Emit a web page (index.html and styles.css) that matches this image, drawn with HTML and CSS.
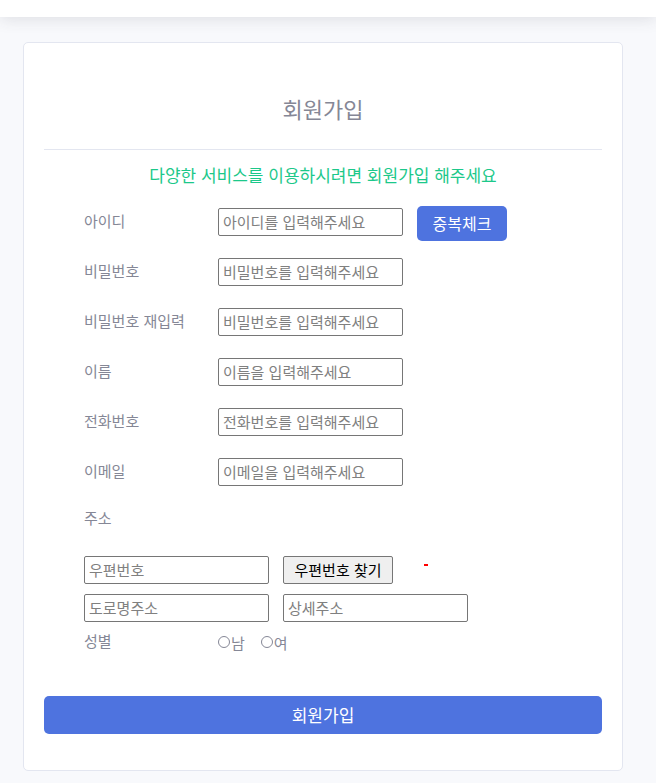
FILE: index.html
```html
<!DOCTYPE html>
<html lang="ko">
<head>
<meta charset="utf-8">
<title>회원가입</title>
<link rel="stylesheet" href="styles.css">
</head>
<body>
<header class="topbar"></header>
<main class="page">
  <section class="card">
    <h1 class="title">회원가입</h1>
    <hr class="divider">
    <p class="notice">다양한 서비스를 이용하시려면 회원가입 해주세요</p>
    <form class="form">
      <div class="row">
        <label class="label">아이디</label>
        <input class="field" type="text" placeholder="아이디를 입력해주세요">
        <button type="button" class="btn-check">중복체크</button>
      </div>
      <div class="row">
        <label class="label">비밀번호</label>
        <input class="field" type="password" placeholder="비밀번호를 입력해주세요">
      </div>
      <div class="row">
        <label class="label">비밀번호 재입력</label>
        <input class="field" type="password" placeholder="비밀번호를 입력해주세요">
      </div>
      <div class="row">
        <label class="label">이름</label>
        <input class="field" type="text" placeholder="이름을 입력해주세요">
      </div>
      <div class="row">
        <label class="label">전화번호</label>
        <input class="field" type="text" placeholder="전화번호를 입력해주세요">
      </div>
      <div class="row">
        <label class="label">이메일</label>
        <input class="field" type="text" placeholder="이메일을 입력해주세요">
      </div>
      <div class="row row-addr-label">
        <label class="label">주소</label>
      </div>
      <div class="addr">
        <div class="addr-line">
          <input class="field" type="text" placeholder="우편번호">
          <button type="button" class="btn-post">우편번호 찾기</button>
          <span class="err"></span>
        </div>
        <div class="addr-line">
          <input class="field" type="text" placeholder="도로명주소">
          <input class="field" type="text" placeholder="상세주소">
        </div>
      </div>
      <div class="row-gender">
        <span class="label">성별</span>
        <label class="radio"><input type="radio" name="g" class="radio-input">남</label>
        <label class="radio"><input type="radio" name="g" class="radio-input">여</label>
      </div>
      <button type="submit" class="btn-submit">회원가입</button>
    </form>
  </section>
</main>
</body>
</html>
```
FILE: styles.css
```css
* { box-sizing: border-box; }
html, body { margin: 0; padding: 0; }
body {
  background: #f8f9fc;
  font-family: "Noto Sans CJK KR", "Noto Sans", sans-serif;
  color: #858796;
  height: 783px;
  overflow: hidden;
}
.topbar {
  height: 17px;
  background: #fff;
  box-shadow: 0 2px 16px 0 rgba(58, 59, 69, 0.14);
  position: relative;
  z-index: 1;
}
.page {
  padding: 25px 33px 0 23px;
}
.card {
  width: 600px;
  background: #fff;
  border: 1px solid #e3e6f0;
  border-radius: 5px;
  padding: 49px 20px 36px;
}
.title {
  margin: 0;
  font-size: 22px;
  font-weight: 400;
  line-height: 32px;
  text-align: center;
  color: #858796;
}
.divider {
  margin: 25px 0 0;
  border: 0;
  border-top: 1px solid #e3e6f0;
}
.notice {
  margin: 13px 0 0;
  font-size: 17px;
  line-height: 24px;
  text-align: center;
  color: #1cc88a;
}
.form {
  margin: 10px 0 0;
  padding: 0 40px;
}
.row {
  height: 50px;
  display: flex;
  align-items: center;
}
.label {
  width: 134px;
  flex: none;
  font-size: 15px;
  line-height: 20px;
  margin-top: -2px;
  color: #858796;
}
.field {
  width: 185px;
  height: 28px;
  border: 1px solid #767676;
  border-radius: 2px;
  padding: 0 4px 2px;
  font-family: inherit;
  font-size: 15px;
  color: #333;
  background: #fff;
}
.field::placeholder { color: #808080; }
.btn-check {
  margin-left: 14px;
  width: 90px;
  height: 35px;
  margin-top: 3px;
  border: 0;
  border-radius: 5px;
  background: #4e73df;
  color: #fff;
  font-family: inherit;
  font-size: 16px;
  padding: 0 0 2px;
}
.row-addr-label { height: 44px; }
.addr {
  margin-top: 15px;
  display: flex;
  flex-direction: column;
  gap: 10px;
}
.addr-line {
  display: flex;
  align-items: center;
  gap: 14px;
}
.btn-post {
  width: 110px;
  height: 28px;
  border: 1px solid #767676;
  border-radius: 2px;
  background: #efefef;
  color: #000;
  font-family: inherit;
  font-size: 15px;
  padding: 0 0 2px;
}
.err {
  width: 4px;
  height: 2px;
  background: #f00;
  margin: 0 0 0 17px;
  align-self: flex-start;
  margin-top: 8px;
}
.row-gender {
  margin-top: 9px;
  height: 22px;
  display: flex;
  align-items: center;
}
.radio {
  display: inline-flex;
  align-items: center;
  font-size: 15px;
  color: #858796;
  margin-right: 16px;
}
.radio-input {
  appearance: none;
  -webkit-appearance: none;
  width: 12px;
  height: 12px;
  margin: 0 1px 0 0;
  border: 1px solid #858796;
  border-radius: 50%;
}
.btn-submit {
  display: block;
  margin: 43px -40px 0;
  width: calc(100% + 80px);
  height: 38px;
  border: 0;
  border-radius: 5px;
  background: #4e73df;
  color: #fff;
  font-family: inherit;
  font-size: 17px;
  padding: 0 0 2px;
}
```
